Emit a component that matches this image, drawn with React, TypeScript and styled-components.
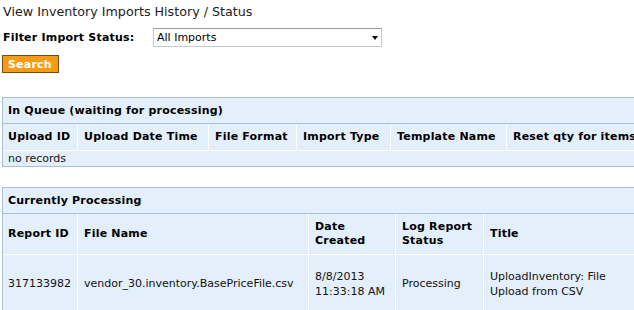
import React from 'react';
import styled, { createGlobalStyle } from 'styled-components';

const Global = createGlobalStyle`
  html, body { margin: 0; padding: 0; overflow: hidden; background: #fff; }
  body { font-family: Verdana, "DejaVu Sans", sans-serif; font-size: 11px; color: #000; }
  *, *::before, *::after { box-sizing: border-box; }
`;

const Page = styled.div`
  width: 634px;
  height: 310px;
  overflow: hidden;
  padding-top: 4px;
`;

const Title = styled.div`
  font-size: 12.7px;
  line-height: 16px;
  margin-left: 3px;
  color: #222;
  white-space: nowrap;
`;

const FilterRow = styled.div`
  display: flex;
  align-items: center;
  margin-top: 8px;
  padding-left: 3px;
`;

const Label = styled.label`
  width: 150px;
  font-weight: bold;
  letter-spacing: 0.2px;
  color: #000;
`;

const SelectWrap = styled.div`
  position: relative;
  width: 229px;
  height: 19px;
`;

const Select = styled.select`
  appearance: none;
  -webkit-appearance: none;
  width: 100%;
  height: 100%;
  margin: 0;
  border: 1px solid #c3cad2;
  border-top-color: #969ca3;
  border-radius: 0;
  padding: 0 0 0 3px;
  background: #fff;
  color: #000;
  font-family: inherit;
  font-size: 11px;
  outline: none;
`;

const Arrow = styled.span`
  position: absolute;
  right: 4px;
  top: 8px;
  width: 0;
  height: 0;
  border-left: 3.5px solid transparent;
  border-right: 3.5px solid transparent;
  border-top: 4px solid #000;
  pointer-events: none;
`;

const SearchButton = styled.button`
  display: block;
  margin: 8px 0 0 2px;
  height: 18px;
  padding: 0 6px 0 5px;
  background: #f89b14;
  border: 1px solid #6a4f1d;
  border-radius: 0;
  color: #fff;
  font-family: inherit;
  font-size: 11px;
  font-weight: bold;
  letter-spacing: 0.2px;
  line-height: 15px;
`;

const Table = styled.table<{ $width: number; $top: number }>`
  margin: ${(p) => p.$top}px 0 0 2px;
  width: ${(p) => p.$width}px;
  table-layout: fixed;
  border-collapse: separate;
  border-spacing: 0;
  border: 1px solid #a9c1d8;
  background: #e4effc;
`;

const Col = styled.col<{ $w?: number }>`
  width: ${(p) => (p.$w ? `${p.$w}px` : 'auto')};
`;

const SectionCell = styled.th<{ $h: number }>`
  height: ${(p) => p.$h}px;
  padding: 0 6px 0 5px;
  text-align: left;
  font-weight: bold;
  letter-spacing: 0.2px;
  color: #000;
  border-bottom: 1px solid #a9c1d8;
  white-space: nowrap;
`;

const HeadCell = styled.th<{ $h: number }>`
  height: ${(p) => p.$h}px;
  padding: 0 6px;
  text-align: left;
  vertical-align: middle;
  font-weight: bold;
  letter-spacing: 0.2px;
  color: #000;
  line-height: 14px;
  border-right: 1px solid #fff;
  border-bottom: 1px solid #fff;
  white-space: nowrap;
  &:first-child { padding-left: 5px; }
`;

const DataCell = styled.td<{ $h: number }>`
  height: ${(p) => p.$h}px;
  padding: 0 6px;
  vertical-align: middle;
  color: #111;
  line-height: 15px;
  border-right: 1px solid #fff;
  white-space: nowrap;
  &:first-child { padding-left: 5px; }
`;

const EmptyCell = styled.td`
  height: 15px;
  padding: 0 5px;
  color: #111;
  line-height: 14px;
`;

const queueCols = [
  { title: 'Upload ID', w: 75 },
  { title: 'Upload Date Time', w: 131 },
  { title: 'File Format', w: 88 },
  { title: 'Import Type', w: 94 },
  { title: 'Template Name', w: 116 },
  { title: 'Reset qty for items', w: 230 },
];

const processing = {
  id: '317133982',
  file: 'vendor_30.inventory.BasePriceFile.csv',
  date: ['8/8/2013', '11:33:18 AM'],
  status: 'Processing',
  title: ['UploadInventory: File', 'Upload from CSV'],
};

export default function App() {
  return (
    <>
      <Global />
      <Page>
        <Title>View Inventory Imports History / Status</Title>
        <FilterRow>
          <Label htmlFor="status">Filter Import Status:</Label>
          <SelectWrap>
            <Select id="status" defaultValue="all">
              <option value="all">All Imports</option>
              <option value="queue">In Queue</option>
              <option value="processing">Processing</option>
              <option value="done">Completed</option>
            </Select>
            <Arrow />
          </SelectWrap>
        </FilterRow>
        <SearchButton type="button">Search</SearchButton>

        <Table $width={736} $top={24}>
          <colgroup>
            {queueCols.map((c) => (
              <Col key={c.title} $w={c.w} />
            ))}
          </colgroup>
          <thead>
            <tr>
              <SectionCell $h={26} colSpan={6}>In Queue (waiting for processing)</SectionCell>
            </tr>
            <tr>
              {queueCols.map((c) => (
                <HeadCell key={c.title} $h={27}>{c.title}</HeadCell>
              ))}
            </tr>
          </thead>
          <tbody>
            <tr>
              <EmptyCell colSpan={6}>no records</EmptyCell>
            </tr>
          </tbody>
        </Table>

        <Table $width={650} $top={20}>
          <colgroup>
            <Col $w={75} />
            <Col $w={231} />
            <Col $w={87} />
            <Col $w={88} />
            <Col />
          </colgroup>
          <thead>
            <tr>
              <SectionCell $h={26} colSpan={5}>Currently Processing</SectionCell>
            </tr>
            <tr>
              <HeadCell $h={41}>Report ID</HeadCell>
              <HeadCell $h={41}>File Name</HeadCell>
              <HeadCell $h={41}>Date<br />Created</HeadCell>
              <HeadCell $h={41}>Log Report<br />Status</HeadCell>
              <HeadCell $h={41}>Title</HeadCell>
            </tr>
          </thead>
          <tbody>
            <tr>
              <DataCell $h={57}>{processing.id}</DataCell>
              <DataCell $h={57}>{processing.file}</DataCell>
              <DataCell $h={57}>{processing.date[0]}<br />{processing.date[1]}</DataCell>
              <DataCell $h={57}>{processing.status}</DataCell>
              <DataCell $h={57}>{processing.title[0]}<br />{processing.title[1]}</DataCell>
            </tr>
          </tbody>
        </Table>
      </Page>
    </>
  );
}
